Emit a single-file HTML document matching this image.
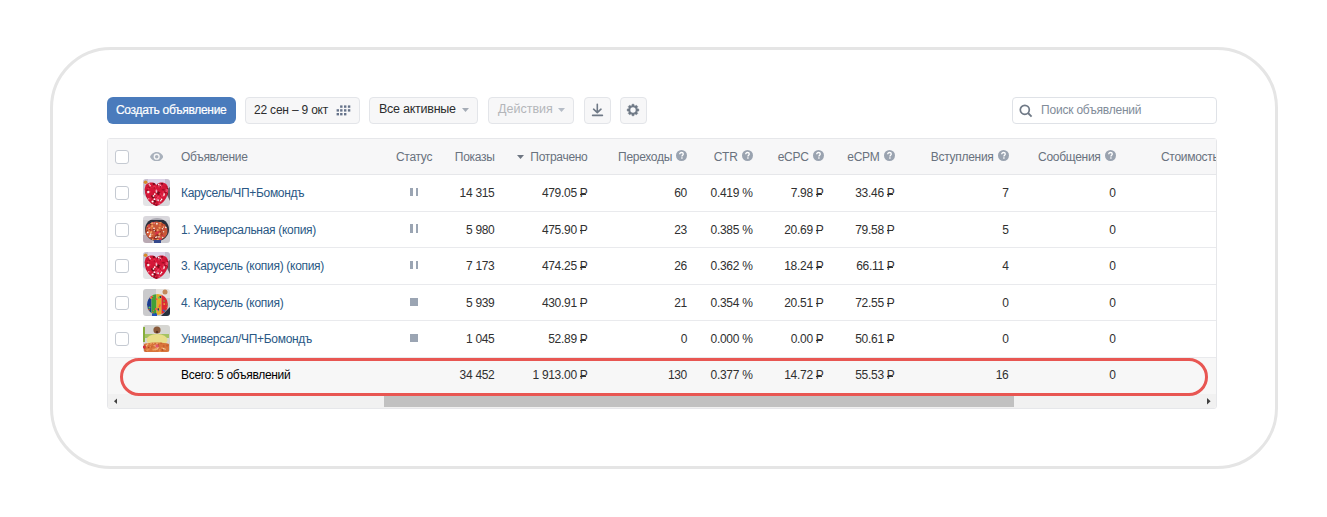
<!DOCTYPE html><html><head><meta charset="utf-8"><style>
*{box-sizing:border-box;margin:0;padding:0}
html,body{width:1327px;height:517px;overflow:hidden;background:#fff;font-family:"Liberation Sans",sans-serif;font-size:12px;color:#000}
div,span,svg{position:absolute}
.t{white-space:nowrap;line-height:14px;letter-spacing:-0.3px}
.frame{left:50px;top:47px;width:1228px;height:422px;border:3px solid #e5e5e5;border-radius:61px}
.btn{top:97px;height:27px;border:1px solid #e3e5e9;border-radius:4px;background:#f7f7f8}
.blue{background:#4a7bbc;border:none;border-radius:6px}
.h{color:#69727e}
.lnk{color:#2a5885}
.cb{left:115px;width:14px;height:14px;border:1px solid #c5cad2;border-radius:3px;background:#fff}
.q{width:11px;height:11px;border-radius:50%;background:#9aa3b0}
.th{left:143px;width:27px;height:27px;border-radius:3px;overflow:hidden}
.rub{position:relative;display:inline-block;margin-left:3px}
.rub:after{content:"";position:absolute;left:0.5px;top:7.6px;width:5.5px;height:1px;background:currentColor}
.d{color:#303030}
</style></head><body>
<div class="frame"></div>
<div class="btn blue" style="left:107px;width:129px"></div>
<span class="t" style="left:116px;top:102.5px;color:#fff;letter-spacing:-0.3px;-webkit-text-stroke:0.2px #fff">Создать объявление</span>
<div class="btn" style="left:245px;width:115px"></div>
<span class="t" style="left:254px;top:103px;letter-spacing:-0.2px;color:#2c2d2e">22 сен – 9 окт</span>
<svg style="left:336px;top:105px" width="15" height="11" viewBox="0 0 15 11"><g fill="#66738a"><rect x="4.1" y="0.4" width="2.4" height="2.4"/><rect x="8" y="0.4" width="2.4" height="2.4"/><rect x="11.9" y="0.4" width="2.4" height="2.4"/><rect x="0.6" y="4.2" width="2.4" height="2.4"/><rect x="4.1" y="4.2" width="2.4" height="2.4"/><rect x="8" y="4.2" width="2.4" height="2.4"/><rect x="11.9" y="4.2" width="2.4" height="2.4"/><rect x="0.6" y="8" width="2.4" height="2.4"/><rect x="4.1" y="8" width="2.4" height="2.4"/><rect x="8" y="8" width="2.4" height="2.4"/></g></svg>
<div class="btn" style="left:369px;width:109px"></div>
<span class="t" style="left:379px;top:102px;font-size:12.5px;letter-spacing:-0.25px;color:#2c2d2e">Все активные</span>
<svg style="left:462px;top:108px" width="7" height="4" viewBox="0 0 7 4"><path d="M0 0H7L3.5 4Z" fill="#a5acb6"/></svg>
<div class="btn" style="left:488px;width:86px"></div>
<span class="t" style="left:498px;top:102px;font-size:12.5px;letter-spacing:0;color:#b4b6ba">Действия</span>
<svg style="left:558px;top:108px" width="7" height="4" viewBox="0 0 7 4"><path d="M0 0H7L3.5 4Z" fill="#b5bcc6"/></svg>
<div class="btn" style="left:584px;width:26.5px"></div>
<svg style="left:591px;top:102px" width="13" height="15" viewBox="0 0 13 15"><path d="M6.3 2.2V10.3M2.6 7.2L6.3 10.6L10 7.2" stroke="#6f7986" stroke-width="1.6" fill="none" stroke-linecap="round" stroke-linejoin="round"/><path d="M1.6 13.4H11.4" stroke="#6f7986" stroke-width="1.6" stroke-linecap="round"/></svg>
<div class="btn" style="left:620px;width:27px"></div>
<svg style="left:626px;top:103px" width="14" height="14" viewBox="-7.5 -7.5 15 15"><path d="M-0.99 -6.22L0.99 -6.22L1.65 -3.97L3.70 -5.10L5.10 -3.70L3.97 -1.65L6.22 -0.99L6.22 0.99L3.97 1.65L5.10 3.70L3.70 5.10L1.65 3.97L0.99 6.22L-0.99 6.22L-1.65 3.97L-3.70 5.10L-5.10 3.70L-3.97 1.65L-6.22 0.99L-6.22 -0.99L-3.97 -1.65L-5.10 -3.70L-3.70 -5.10L-1.65 -3.97Z" fill="#6f7986" stroke="#6f7986" stroke-width="0.5" stroke-linejoin="round"/><circle r="2.9" fill="#f7f8fa"/></svg>
<div class="btn" style="left:1012px;width:205px;background:#fff;border-color:#dfe2e7"></div>
<span class="t" style="left:1041px;top:103px;color:#818c99;letter-spacing:-0.2px">Поиск объявлений</span>
<svg style="left:1019px;top:104px" width="14" height="14" viewBox="0 0 14 14"><circle cx="5.8" cy="5.8" r="4.5" stroke="#6f7986" stroke-width="1.7" fill="none"/><path d="M9 9L12.6 12.6" stroke="#6f7986" stroke-width="1.8"/></svg>
<div style="left:107px;top:138px;width:1110px;height:271px;border:1px solid #e6e7ea;border-radius:3px;background:#fff"></div>
<div style="left:108px;top:139px;width:1108px;height:35.5px;background:#f7f7f8;border-bottom:1px solid #e6e7ea"></div>
<div class="cb" style="top:150px"></div>
<svg style="left:149.8px;top:152px" width="13.4" height="9.4" viewBox="0 0 13.4 9.4"><path d="M6.7 0C3.4 0 0.9 2.6 0 4.7C0.9 6.8 3.4 9.4 6.7 9.4C10 9.4 12.5 6.8 13.4 4.7C12.5 2.6 10 0 6.7 0Z" fill="#a9b1bc"/><circle cx="6.7" cy="4.7" r="3.1" fill="#f7f7f8"/><circle cx="6.7" cy="4.7" r="1.75" fill="#a9b1bc"/></svg>
<span class="t h" style="left:181px;top:150px">Объявление</span>
<span class="t h" style="left:396px;top:150px">Статус</span>
<span class="t h" style="right:832.5px;top:150px;">Показы</span>
<svg style="left:517px;top:155px" width="7" height="4" viewBox="0 0 7 4"><path d="M0 0H7L3.5 4Z" fill="#6e7682"/></svg>
<span class="t h" style="right:739.5px;top:150px;">Потрачено</span>
<span class="t h" style="right:655px;top:150px;">Переходы</span>
<svg style="left:676px;top:149.5px" width="11" height="11" viewBox="0 0 11 11"><circle cx="5.5" cy="5.5" r="5.5" fill="#9aa3b0"/><path d="M3.7 4.2C3.7 3.1 4.5 2.5 5.5 2.5C6.5 2.5 7.3 3.1 7.3 4C7.3 5.1 5.9 5.2 5.9 6.4" stroke="#fff" stroke-width="1.3" fill="none"/><rect x="5.2" y="7.3" width="1.4" height="1.4" fill="#fff"/></svg>
<span class="t h" style="right:589.5px;top:150px;">CTR</span>
<svg style="left:741.5px;top:149.5px" width="11" height="11" viewBox="0 0 11 11"><circle cx="5.5" cy="5.5" r="5.5" fill="#9aa3b0"/><path d="M3.7 4.2C3.7 3.1 4.5 2.5 5.5 2.5C6.5 2.5 7.3 3.1 7.3 4C7.3 5.1 5.9 5.2 5.9 6.4" stroke="#fff" stroke-width="1.3" fill="none"/><rect x="5.2" y="7.3" width="1.4" height="1.4" fill="#fff"/></svg>
<span class="t h" style="right:518.5px;top:150px;">eCPC</span>
<svg style="left:812.5px;top:149.5px" width="11" height="11" viewBox="0 0 11 11"><circle cx="5.5" cy="5.5" r="5.5" fill="#9aa3b0"/><path d="M3.7 4.2C3.7 3.1 4.5 2.5 5.5 2.5C6.5 2.5 7.3 3.1 7.3 4C7.3 5.1 5.9 5.2 5.9 6.4" stroke="#fff" stroke-width="1.3" fill="none"/><rect x="5.2" y="7.3" width="1.4" height="1.4" fill="#fff"/></svg>
<span class="t h" style="right:447.5px;top:150px;">eCPM</span>
<svg style="left:883.5px;top:149.5px" width="11" height="11" viewBox="0 0 11 11"><circle cx="5.5" cy="5.5" r="5.5" fill="#9aa3b0"/><path d="M3.7 4.2C3.7 3.1 4.5 2.5 5.5 2.5C6.5 2.5 7.3 3.1 7.3 4C7.3 5.1 5.9 5.2 5.9 6.4" stroke="#fff" stroke-width="1.3" fill="none"/><rect x="5.2" y="7.3" width="1.4" height="1.4" fill="#fff"/></svg>
<span class="t h" style="right:333.5px;top:150px;">Вступления</span>
<svg style="left:997.5px;top:149.5px" width="11" height="11" viewBox="0 0 11 11"><circle cx="5.5" cy="5.5" r="5.5" fill="#9aa3b0"/><path d="M3.7 4.2C3.7 3.1 4.5 2.5 5.5 2.5C6.5 2.5 7.3 3.1 7.3 4C7.3 5.1 5.9 5.2 5.9 6.4" stroke="#fff" stroke-width="1.3" fill="none"/><rect x="5.2" y="7.3" width="1.4" height="1.4" fill="#fff"/></svg>
<span class="t h" style="right:226.5px;top:150px;">Сообщения</span>
<svg style="left:1104.5px;top:149.5px" width="11" height="11" viewBox="0 0 11 11"><circle cx="5.5" cy="5.5" r="5.5" fill="#9aa3b0"/><path d="M3.7 4.2C3.7 3.1 4.5 2.5 5.5 2.5C6.5 2.5 7.3 3.1 7.3 4C7.3 5.1 5.9 5.2 5.9 6.4" stroke="#fff" stroke-width="1.3" fill="none"/><rect x="5.2" y="7.3" width="1.4" height="1.4" fill="#fff"/></svg>
<span class="t h" style="left:1161px;top:150px;width:55px;overflow:hidden">Стоимость</span>
<div class="cb" style="top:186.0px"></div>
<svg class="th" style="top:179.0px" width="27" height="27" viewBox="0 0 27 27"><defs><filter id="bl0" x="0" y="0" width="1" height="1"><feGaussianBlur stdDeviation="0.45"/></filter></defs><g filter="url(#bl0)"><rect width="27" height="27" fill="#c6c0d0"/><rect x="5" y="0" width="17" height="7" fill="#dcd4e8"/><path d="M0 15L12 27H0Z" fill="#e4e4e6"/><path d="M27 15L15 27H27Z" fill="#d8d8dc"/><path d="M22 12L27 8V22Z" fill="#6e5e66"/><circle cx="2.6" cy="3.2" r="1.8" fill="#d88a2a"/><clipPath id="hc0"><path d="M13.5 27C7 25 2 19 1.8 11C1.6 5 6 2.8 10.5 3.8C12 4.3 13 5.3 13.5 6.3C14 5.3 15 4.3 16.5 3.8C21 2.8 25.4 5 25.2 11C25 19 20 25 13.5 27Z"/></clipPath><path d="M13.5 27C7 25 2 19 1.8 11C1.6 5 6 2.8 10.5 3.8C12 4.3 13 5.3 13.5 6.3C14 5.3 15 4.3 16.5 3.8C21 2.8 25.4 5 25.2 11C25 19 20 25 13.5 27Z" fill="#d41838"/><g clip-path="url(#hc0)"><circle cx="12.3" cy="16.4" r="1.0" fill="#f0466a"/><circle cx="22.4" cy="7.6" r="1.0" fill="#c81430"/><circle cx="16.3" cy="7.5" r="0.9" fill="#f0466a"/><circle cx="3.3" cy="22.4" r="1.1" fill="#a00c26"/><circle cx="10.9" cy="13.9" r="1.2" fill="#c81430"/><circle cx="16.6" cy="23.0" r="0.7" fill="#a00c26"/><circle cx="5.8" cy="8.8" r="1.3" fill="#a00c26"/><circle cx="9.2" cy="17.2" r="1.1" fill="#7a0a1c"/><circle cx="17.0" cy="15.0" r="1.0" fill="#a00c26"/><circle cx="8.0" cy="26.9" r="1.2" fill="#a00c26"/><circle cx="8.9" cy="8.5" r="0.6" fill="#e82a48"/><circle cx="15.1" cy="5.6" r="1.4" fill="#a00c26"/><circle cx="10.7" cy="26.0" r="0.8" fill="#a00c26"/><circle cx="24.2" cy="4.3" r="1.5" fill="#f0466a"/><circle cx="10.9" cy="4.8" r="1.3" fill="#7a0a1c"/><circle cx="7.7" cy="5.1" r="0.6" fill="#e82a48"/><circle cx="11.3" cy="25.1" r="0.8" fill="#7a0a1c"/><circle cx="3.5" cy="4.4" r="0.8" fill="#f0466a"/><circle cx="15.0" cy="13.7" r="1.5" fill="#7a0a1c"/><circle cx="20.2" cy="13.1" r="0.7" fill="#f0466a"/><circle cx="11.5" cy="8.1" r="1.4" fill="#e82a48"/><circle cx="25.4" cy="17.2" r="0.8" fill="#a00c26"/><circle cx="10.9" cy="23.5" r="0.7" fill="#c81430"/><circle cx="25.7" cy="8.1" r="0.6" fill="#e82a48"/><circle cx="16.3" cy="22.9" r="0.7" fill="#f0466a"/><circle cx="3.3" cy="17.0" r="0.6" fill="#7a0a1c"/><circle cx="10.2" cy="17.9" r="1.5" fill="#7a0a1c"/><circle cx="13.1" cy="16.8" r="0.8" fill="#f0466a"/><circle cx="4.9" cy="24.8" r="0.8" fill="#c81430"/><circle cx="5.7" cy="20.7" r="0.8" fill="#c81430"/><circle cx="24.8" cy="24.2" r="0.7" fill="#c81430"/><circle cx="2.2" cy="5.6" r="1.5" fill="#c81430"/><circle cx="7.0" cy="19.9" r="1.0" fill="#e82a48"/><circle cx="23.6" cy="14.8" r="0.8" fill="#c81430"/><circle cx="19.0" cy="4.7" r="1.0" fill="#7a0a1c"/><circle cx="17.3" cy="17.8" r="0.9" fill="#a00c26"/><circle cx="23.9" cy="7.9" r="0.7" fill="#a00c26"/><circle cx="11.3" cy="9.0" r="0.8" fill="#a00c26"/><circle cx="10.2" cy="16.7" r="0.7" fill="#7a0a1c"/><circle cx="4.5" cy="13.8" r="1.2" fill="#e82a48"/><circle cx="18.3" cy="17.0" r="1.1" fill="#7a0a1c"/><circle cx="24.1" cy="14.4" r="1.2" fill="#e82a48"/><circle cx="25.1" cy="3.5" r="1.0" fill="#a00c26"/><circle cx="19.3" cy="10.7" r="0.7" fill="#a00c26"/><circle cx="14.7" cy="20.7" r="1.3" fill="#7a0a1c"/><circle cx="23.9" cy="11.4" r="1.4" fill="#f0466a"/><circle cx="22.8" cy="13.0" r="1.4" fill="#a00c26"/><circle cx="15.3" cy="18.0" r="0.9" fill="#f0466a"/><circle cx="1.3" cy="4.7" r="1.2" fill="#a00c26"/><circle cx="25.8" cy="24.1" r="0.9" fill="#e82a48"/><circle cx="19.4" cy="16.9" r="1.0" fill="#f0466a"/><circle cx="14.5" cy="15.4" r="0.6" fill="#c81430"/><circle cx="16.0" cy="14.5" r="1.5" fill="#7a0a1c"/><circle cx="3.8" cy="21.7" r="0.8" fill="#f0466a"/><circle cx="1.3" cy="10.2" r="0.8" fill="#c81430"/><circle cx="5.2" cy="24.7" r="1.0" fill="#f0466a"/><circle cx="7.0" cy="12.7" r="0.8" fill="#e82a48"/><circle cx="11.8" cy="22.3" r="1.4" fill="#7a0a1c"/><circle cx="10.6" cy="17.0" r="0.8" fill="#e82a48"/><circle cx="4.4" cy="11.4" r="1.2" fill="#a00c26"/><circle cx="24.8" cy="9.6" r="0.7" fill="#7a0a1c"/><circle cx="12.8" cy="25.2" r="0.9" fill="#f0466a"/><circle cx="14.0" cy="19.1" r="1.0" fill="#c81430"/><circle cx="2.9" cy="3.8" r="0.6" fill="#c81430"/><circle cx="18.7" cy="16.7" r="1.2" fill="#e82a48"/><circle cx="15.1" cy="18.4" r="1.0" fill="#f0466a"/><circle cx="1.6" cy="22.9" r="1.3" fill="#7a0a1c"/><circle cx="20.9" cy="26.6" r="1.0" fill="#a00c26"/><circle cx="16.7" cy="18.7" r="1.5" fill="#e82a48"/><circle cx="18.1" cy="7.8" r="0.8" fill="#f0466a"/><circle cx="18.9" cy="21.1" r="1.2" fill="#c81430"/><circle cx="5.5" cy="9.5" r="1.1" fill="#e82a48"/><circle cx="24.7" cy="15.0" r="1.0" fill="#7a0a1c"/><circle cx="20.8" cy="24.7" r="1.0" fill="#a00c26"/><circle cx="23.3" cy="12.3" r="1.0" fill="#f0466a"/><circle cx="16.6" cy="24.8" r="1.1" fill="#f0466a"/><circle cx="17.3" cy="15.1" r="1.0" fill="#e82a48"/><circle cx="17.3" cy="7.9" r="0.8" fill="#a00c26"/><circle cx="23.5" cy="26.5" r="1.1" fill="#e82a48"/><circle cx="20.8" cy="10.7" r="0.9" fill="#a00c26"/><circle cx="3.1" cy="13.6" r="1.0" fill="#c81430"/><circle cx="7.9" cy="25.1" r="1.3" fill="#7a0a1c"/><circle cx="2.6" cy="22.2" r="1.1" fill="#7a0a1c"/><circle cx="18.2" cy="25.0" r="0.7" fill="#f0466a"/><circle cx="13.9" cy="20.4" r="1.5" fill="#f0466a"/><circle cx="13.3" cy="25.8" r="1.3" fill="#a00c26"/><circle cx="12.0" cy="16.4" r="1.2" fill="#c81430"/><circle cx="14.1" cy="23.2" r="0.8" fill="#c81430"/><circle cx="17.8" cy="25.9" r="0.8" fill="#c81430"/><circle cx="22.3" cy="26.2" r="0.8" fill="#c81430"/><circle cx="13.5" cy="12.8" r="0.9" fill="#f6eef0"/><circle cx="15.7" cy="5.5" r="0.9" fill="#f6eef0"/><circle cx="11.4" cy="20.2" r="0.9" fill="#f6eef0"/><circle cx="17.5" cy="6.3" r="0.8" fill="#f8a0b8"/><circle cx="23.1" cy="22.5" r="0.7" fill="#e8c8d4"/><circle cx="13.4" cy="11.5" r="0.9" fill="#f8a0b8"/><circle cx="5.3" cy="13.0" r="1.2" fill="#f6eef0"/><circle cx="5.7" cy="19.8" r="0.6" fill="#f6eef0"/><circle cx="6.3" cy="5.2" r="0.8" fill="#e8c8d4"/><circle cx="10.5" cy="16.8" r="0.9" fill="#f6eef0"/><circle cx="15.2" cy="21.2" r="1.0" fill="#e8c8d4"/><circle cx="17.7" cy="21.7" r="0.8" fill="#f6eef0"/><circle cx="11.7" cy="15.1" r="0.9" fill="#ffffff"/><circle cx="21.1" cy="15.1" r="0.9" fill="#ffffff"/><circle cx="20.9" cy="16.6" r="0.7" fill="#ffffff"/><circle cx="18.6" cy="20.4" r="0.8" fill="#ffffff"/><circle cx="9.6" cy="22.5" r="1.1" fill="#ffffff"/><circle cx="7.1" cy="6.8" r="0.7" fill="#ffffff"/></g></g></svg>
<span class="t lnk" style="left:181px;top:186.0px">Карусель/ЧП+Бомондъ</span>
<div style="left:410px;top:187.8px;width:2.8px;height:8.5px;background:#9ba5b3"></div><div style="left:415.5px;top:187.8px;width:2.7px;height:8.5px;background:#9ba5b3"></div>
<span class="t d" style="right:832.5px;top:186.0px;">14 315</span>
<span class="t d" style="right:739.5px;top:186.0px;">479.05<span class="rub">Р</span></span>
<span class="t d" style="right:640px;top:186.0px;">60</span>
<span class="t d" style="right:574.5px;top:186.0px;">0.419 %</span>
<span class="t d" style="right:503.5px;top:186.0px;">7.98<span class="rub">Р</span></span>
<span class="t d" style="right:432.5px;top:186.0px;">33.46<span class="rub">Р</span></span>
<span class="t d" style="right:318.5px;top:186.0px;">7</span>
<span class="t d" style="right:211.5px;top:186.0px;">0</span>
<div style="left:108px;top:210.5px;width:1108px;height:1px;background:#e9eaed"></div>
<div class="cb" style="top:222.5px"></div>
<svg class="th" style="top:215.5px" width="27" height="27" viewBox="0 0 27 27"><defs><filter id="bl1" x="0" y="0" width="1" height="1"><feGaussianBlur stdDeviation="0.45"/></filter></defs><g filter="url(#bl1)"><rect width="27" height="27" fill="#cdcbd0"/><rect x="0" y="19" width="9" height="8" fill="#b9a9b3"/><ellipse cx="14" cy="13.5" rx="12" ry="11.5" fill="#2c2e3c"/><rect x="0" y="0" width="27" height="4" fill="#e0dde2" opacity="0.7"/><clipPath id="pc1"><ellipse cx="13.5" cy="15" rx="11" ry="9.5"/></clipPath><ellipse cx="13.5" cy="15" rx="11" ry="9.5" fill="#c85838"/><g clip-path="url(#pc1)"><circle cx="5.8" cy="12.4" r="1.3" fill="#d8344a"/><circle cx="12.4" cy="20.0" r="0.8" fill="#b03a28"/><circle cx="16.6" cy="20.2" r="0.8" fill="#e07040"/><circle cx="17.6" cy="22.3" r="0.7" fill="#f0a060"/><circle cx="14.1" cy="19.4" r="1.5" fill="#8a2a20"/><circle cx="20.7" cy="20.3" r="0.7" fill="#d8344a"/><circle cx="4.7" cy="15.5" r="1.4" fill="#8a2a20"/><circle cx="13.6" cy="8.6" r="0.8" fill="#e07040"/><circle cx="20.8" cy="23.8" r="1.1" fill="#e07040"/><circle cx="6.7" cy="17.9" r="1.3" fill="#e07040"/><circle cx="10.5" cy="13.9" r="0.9" fill="#8a2a20"/><circle cx="8.2" cy="12.1" r="1.4" fill="#e07040"/><circle cx="7.6" cy="13.6" r="1.0" fill="#f0a060"/><circle cx="7.9" cy="8.1" r="1.3" fill="#8a2a20"/><circle cx="10.5" cy="6.6" r="1.1" fill="#d8344a"/><circle cx="7.8" cy="16.1" r="1.3" fill="#f0a060"/><circle cx="9.2" cy="22.3" r="1.3" fill="#b03a28"/><circle cx="12.1" cy="22.0" r="1.2" fill="#8a2a20"/><circle cx="19.3" cy="19.5" r="0.8" fill="#d8344a"/><circle cx="7.7" cy="20.1" r="1.0" fill="#f0a060"/><circle cx="4.2" cy="11.8" r="0.6" fill="#8a2a20"/><circle cx="9.5" cy="23.3" r="0.9" fill="#f0a060"/><circle cx="17.2" cy="15.8" r="0.7" fill="#8a2a20"/><circle cx="14.3" cy="14.5" r="1.2" fill="#b03a28"/><circle cx="19.2" cy="23.6" r="0.7" fill="#e07040"/><circle cx="6.2" cy="9.5" r="1.0" fill="#d8344a"/><circle cx="5.0" cy="8.7" r="0.6" fill="#d8344a"/><circle cx="9.2" cy="10.2" r="1.1" fill="#f0a060"/><circle cx="14.2" cy="23.4" r="1.4" fill="#8a2a20"/><circle cx="6.0" cy="13.4" r="1.1" fill="#e07040"/><circle cx="17.4" cy="23.2" r="1.4" fill="#d8344a"/><circle cx="7.2" cy="14.0" r="1.4" fill="#b03a28"/><circle cx="14.8" cy="16.3" r="1.5" fill="#d8344a"/><circle cx="12.4" cy="15.0" r="0.9" fill="#8a2a20"/><circle cx="14.6" cy="14.2" r="1.1" fill="#f0a060"/><circle cx="9.7" cy="18.6" r="0.6" fill="#f0a060"/><circle cx="19.4" cy="16.1" r="1.0" fill="#b03a28"/><circle cx="17.7" cy="6.0" r="1.3" fill="#f0a060"/><circle cx="5.0" cy="23.8" r="0.7" fill="#f0a060"/><circle cx="22.1" cy="13.2" r="0.8" fill="#d8344a"/><circle cx="19.1" cy="5.9" r="1.4" fill="#e07040"/><circle cx="18.5" cy="13.9" r="1.1" fill="#b03a28"/><circle cx="6.3" cy="16.9" r="0.7" fill="#d8344a"/><circle cx="21.2" cy="11.8" r="0.7" fill="#b03a28"/><circle cx="12.9" cy="17.7" r="1.1" fill="#d8344a"/><circle cx="16.8" cy="18.0" r="1.3" fill="#f0a060"/><circle cx="14.6" cy="24.0" r="1.3" fill="#f0a060"/><circle cx="8.8" cy="7.2" r="1.3" fill="#f0a060"/><circle cx="16.5" cy="11.8" r="1.1" fill="#f0a060"/><circle cx="18.5" cy="18.3" r="1.2" fill="#b03a28"/><circle cx="19.1" cy="8.6" r="1.1" fill="#b03a28"/><circle cx="17.1" cy="8.7" r="1.2" fill="#e07040"/><circle cx="4.2" cy="9.9" r="1.2" fill="#e07040"/><circle cx="6.0" cy="15.3" r="1.3" fill="#e07040"/><circle cx="22.3" cy="8.1" r="1.2" fill="#b03a28"/><circle cx="11.2" cy="14.6" r="0.7" fill="#f2ece6"/><circle cx="13.9" cy="7.7" r="0.9" fill="#f2ece6"/><circle cx="12.8" cy="21.4" r="0.7" fill="#f2ece6"/><circle cx="19.4" cy="12.8" r="0.7" fill="#f2ece6"/><circle cx="17.4" cy="24.8" r="0.6" fill="#ffffff"/><circle cx="19.7" cy="21.5" r="0.7" fill="#f2ece6"/><circle cx="11.1" cy="6.9" r="0.5" fill="#ffffff"/><circle cx="4.8" cy="16.3" r="0.9" fill="#ffffff"/><circle cx="13.2" cy="21.5" r="0.5" fill="#f2ece6"/><circle cx="7.7" cy="18.2" r="0.8" fill="#f2ece6"/><circle cx="13.9" cy="20.3" r="0.6" fill="#ffffff"/><circle cx="6.1" cy="12.2" r="0.7" fill="#e8d8c8"/><circle cx="22.9" cy="11.4" r="0.8" fill="#ffffff"/><circle cx="23.2" cy="23.8" r="0.7" fill="#ffffff"/><circle cx="20.7" cy="11.1" r="0.6" fill="#ffffff"/><circle cx="24.3" cy="19.6" r="0.6" fill="#e8d8c8"/><circle cx="11.0" cy="12.3" r="0.8" fill="#ffffff"/><circle cx="15.9" cy="20.9" r="0.8" fill="#e8d8c8"/><circle cx="20.5" cy="15.8" r="0.8" fill="#e8d8c8"/><circle cx="6.9" cy="20.2" r="0.9" fill="#ffffff"/><circle cx="7.9" cy="6.2" r="0.8" fill="#f2ece6"/><circle cx="24.3" cy="18.0" r="0.5" fill="#ffffff"/></g><rect x="11" y="24" width="7" height="3" fill="#34488c"/></g></svg>
<span class="t lnk" style="left:181px;top:222.5px">1. Универсальная (копия)</span>
<div style="left:410px;top:224.3px;width:2.8px;height:8.5px;background:#9ba5b3"></div><div style="left:415.5px;top:224.3px;width:2.7px;height:8.5px;background:#9ba5b3"></div>
<span class="t d" style="right:832.5px;top:222.5px;">5 980</span>
<span class="t d" style="right:739.5px;top:222.5px;">475.90<span class="rub">Р</span></span>
<span class="t d" style="right:640px;top:222.5px;">23</span>
<span class="t d" style="right:574.5px;top:222.5px;">0.385 %</span>
<span class="t d" style="right:503.5px;top:222.5px;">20.69<span class="rub">Р</span></span>
<span class="t d" style="right:432.5px;top:222.5px;">79.58<span class="rub">Р</span></span>
<span class="t d" style="right:318.5px;top:222.5px;">5</span>
<span class="t d" style="right:211.5px;top:222.5px;">0</span>
<div style="left:108px;top:247.0px;width:1108px;height:1px;background:#e9eaed"></div>
<div class="cb" style="top:259.0px"></div>
<svg class="th" style="top:252.0px" width="27" height="27" viewBox="0 0 27 27"><defs><filter id="bl2" x="0" y="0" width="1" height="1"><feGaussianBlur stdDeviation="0.45"/></filter></defs><g filter="url(#bl2)"><rect width="27" height="27" fill="#c6c0d0"/><rect x="5" y="0" width="17" height="7" fill="#dcd4e8"/><path d="M0 15L12 27H0Z" fill="#e4e4e6"/><path d="M27 15L15 27H27Z" fill="#d8d8dc"/><path d="M22 12L27 8V22Z" fill="#6e5e66"/><circle cx="2.6" cy="3.2" r="1.8" fill="#d88a2a"/><clipPath id="hc2"><path d="M13.5 27C7 25 2 19 1.8 11C1.6 5 6 2.8 10.5 3.8C12 4.3 13 5.3 13.5 6.3C14 5.3 15 4.3 16.5 3.8C21 2.8 25.4 5 25.2 11C25 19 20 25 13.5 27Z"/></clipPath><path d="M13.5 27C7 25 2 19 1.8 11C1.6 5 6 2.8 10.5 3.8C12 4.3 13 5.3 13.5 6.3C14 5.3 15 4.3 16.5 3.8C21 2.8 25.4 5 25.2 11C25 19 20 25 13.5 27Z" fill="#d41838"/><g clip-path="url(#hc2)"><circle cx="12.3" cy="16.4" r="1.0" fill="#f0466a"/><circle cx="22.4" cy="7.6" r="1.0" fill="#c81430"/><circle cx="16.3" cy="7.5" r="0.9" fill="#f0466a"/><circle cx="3.3" cy="22.4" r="1.1" fill="#a00c26"/><circle cx="10.9" cy="13.9" r="1.2" fill="#c81430"/><circle cx="16.6" cy="23.0" r="0.7" fill="#a00c26"/><circle cx="5.8" cy="8.8" r="1.3" fill="#a00c26"/><circle cx="9.2" cy="17.2" r="1.1" fill="#7a0a1c"/><circle cx="17.0" cy="15.0" r="1.0" fill="#a00c26"/><circle cx="8.0" cy="26.9" r="1.2" fill="#a00c26"/><circle cx="8.9" cy="8.5" r="0.6" fill="#e82a48"/><circle cx="15.1" cy="5.6" r="1.4" fill="#a00c26"/><circle cx="10.7" cy="26.0" r="0.8" fill="#a00c26"/><circle cx="24.2" cy="4.3" r="1.5" fill="#f0466a"/><circle cx="10.9" cy="4.8" r="1.3" fill="#7a0a1c"/><circle cx="7.7" cy="5.1" r="0.6" fill="#e82a48"/><circle cx="11.3" cy="25.1" r="0.8" fill="#7a0a1c"/><circle cx="3.5" cy="4.4" r="0.8" fill="#f0466a"/><circle cx="15.0" cy="13.7" r="1.5" fill="#7a0a1c"/><circle cx="20.2" cy="13.1" r="0.7" fill="#f0466a"/><circle cx="11.5" cy="8.1" r="1.4" fill="#e82a48"/><circle cx="25.4" cy="17.2" r="0.8" fill="#a00c26"/><circle cx="10.9" cy="23.5" r="0.7" fill="#c81430"/><circle cx="25.7" cy="8.1" r="0.6" fill="#e82a48"/><circle cx="16.3" cy="22.9" r="0.7" fill="#f0466a"/><circle cx="3.3" cy="17.0" r="0.6" fill="#7a0a1c"/><circle cx="10.2" cy="17.9" r="1.5" fill="#7a0a1c"/><circle cx="13.1" cy="16.8" r="0.8" fill="#f0466a"/><circle cx="4.9" cy="24.8" r="0.8" fill="#c81430"/><circle cx="5.7" cy="20.7" r="0.8" fill="#c81430"/><circle cx="24.8" cy="24.2" r="0.7" fill="#c81430"/><circle cx="2.2" cy="5.6" r="1.5" fill="#c81430"/><circle cx="7.0" cy="19.9" r="1.0" fill="#e82a48"/><circle cx="23.6" cy="14.8" r="0.8" fill="#c81430"/><circle cx="19.0" cy="4.7" r="1.0" fill="#7a0a1c"/><circle cx="17.3" cy="17.8" r="0.9" fill="#a00c26"/><circle cx="23.9" cy="7.9" r="0.7" fill="#a00c26"/><circle cx="11.3" cy="9.0" r="0.8" fill="#a00c26"/><circle cx="10.2" cy="16.7" r="0.7" fill="#7a0a1c"/><circle cx="4.5" cy="13.8" r="1.2" fill="#e82a48"/><circle cx="18.3" cy="17.0" r="1.1" fill="#7a0a1c"/><circle cx="24.1" cy="14.4" r="1.2" fill="#e82a48"/><circle cx="25.1" cy="3.5" r="1.0" fill="#a00c26"/><circle cx="19.3" cy="10.7" r="0.7" fill="#a00c26"/><circle cx="14.7" cy="20.7" r="1.3" fill="#7a0a1c"/><circle cx="23.9" cy="11.4" r="1.4" fill="#f0466a"/><circle cx="22.8" cy="13.0" r="1.4" fill="#a00c26"/><circle cx="15.3" cy="18.0" r="0.9" fill="#f0466a"/><circle cx="1.3" cy="4.7" r="1.2" fill="#a00c26"/><circle cx="25.8" cy="24.1" r="0.9" fill="#e82a48"/><circle cx="19.4" cy="16.9" r="1.0" fill="#f0466a"/><circle cx="14.5" cy="15.4" r="0.6" fill="#c81430"/><circle cx="16.0" cy="14.5" r="1.5" fill="#7a0a1c"/><circle cx="3.8" cy="21.7" r="0.8" fill="#f0466a"/><circle cx="1.3" cy="10.2" r="0.8" fill="#c81430"/><circle cx="5.2" cy="24.7" r="1.0" fill="#f0466a"/><circle cx="7.0" cy="12.7" r="0.8" fill="#e82a48"/><circle cx="11.8" cy="22.3" r="1.4" fill="#7a0a1c"/><circle cx="10.6" cy="17.0" r="0.8" fill="#e82a48"/><circle cx="4.4" cy="11.4" r="1.2" fill="#a00c26"/><circle cx="24.8" cy="9.6" r="0.7" fill="#7a0a1c"/><circle cx="12.8" cy="25.2" r="0.9" fill="#f0466a"/><circle cx="14.0" cy="19.1" r="1.0" fill="#c81430"/><circle cx="2.9" cy="3.8" r="0.6" fill="#c81430"/><circle cx="18.7" cy="16.7" r="1.2" fill="#e82a48"/><circle cx="15.1" cy="18.4" r="1.0" fill="#f0466a"/><circle cx="1.6" cy="22.9" r="1.3" fill="#7a0a1c"/><circle cx="20.9" cy="26.6" r="1.0" fill="#a00c26"/><circle cx="16.7" cy="18.7" r="1.5" fill="#e82a48"/><circle cx="18.1" cy="7.8" r="0.8" fill="#f0466a"/><circle cx="18.9" cy="21.1" r="1.2" fill="#c81430"/><circle cx="5.5" cy="9.5" r="1.1" fill="#e82a48"/><circle cx="24.7" cy="15.0" r="1.0" fill="#7a0a1c"/><circle cx="20.8" cy="24.7" r="1.0" fill="#a00c26"/><circle cx="23.3" cy="12.3" r="1.0" fill="#f0466a"/><circle cx="16.6" cy="24.8" r="1.1" fill="#f0466a"/><circle cx="17.3" cy="15.1" r="1.0" fill="#e82a48"/><circle cx="17.3" cy="7.9" r="0.8" fill="#a00c26"/><circle cx="23.5" cy="26.5" r="1.1" fill="#e82a48"/><circle cx="20.8" cy="10.7" r="0.9" fill="#a00c26"/><circle cx="3.1" cy="13.6" r="1.0" fill="#c81430"/><circle cx="7.9" cy="25.1" r="1.3" fill="#7a0a1c"/><circle cx="2.6" cy="22.2" r="1.1" fill="#7a0a1c"/><circle cx="18.2" cy="25.0" r="0.7" fill="#f0466a"/><circle cx="13.9" cy="20.4" r="1.5" fill="#f0466a"/><circle cx="13.3" cy="25.8" r="1.3" fill="#a00c26"/><circle cx="12.0" cy="16.4" r="1.2" fill="#c81430"/><circle cx="14.1" cy="23.2" r="0.8" fill="#c81430"/><circle cx="17.8" cy="25.9" r="0.8" fill="#c81430"/><circle cx="22.3" cy="26.2" r="0.8" fill="#c81430"/><circle cx="13.5" cy="12.8" r="0.9" fill="#f6eef0"/><circle cx="15.7" cy="5.5" r="0.9" fill="#f6eef0"/><circle cx="11.4" cy="20.2" r="0.9" fill="#f6eef0"/><circle cx="17.5" cy="6.3" r="0.8" fill="#f8a0b8"/><circle cx="23.1" cy="22.5" r="0.7" fill="#e8c8d4"/><circle cx="13.4" cy="11.5" r="0.9" fill="#f8a0b8"/><circle cx="5.3" cy="13.0" r="1.2" fill="#f6eef0"/><circle cx="5.7" cy="19.8" r="0.6" fill="#f6eef0"/><circle cx="6.3" cy="5.2" r="0.8" fill="#e8c8d4"/><circle cx="10.5" cy="16.8" r="0.9" fill="#f6eef0"/><circle cx="15.2" cy="21.2" r="1.0" fill="#e8c8d4"/><circle cx="17.7" cy="21.7" r="0.8" fill="#f6eef0"/><circle cx="11.7" cy="15.1" r="0.9" fill="#ffffff"/><circle cx="21.1" cy="15.1" r="0.9" fill="#ffffff"/><circle cx="20.9" cy="16.6" r="0.7" fill="#ffffff"/><circle cx="18.6" cy="20.4" r="0.8" fill="#ffffff"/><circle cx="9.6" cy="22.5" r="1.1" fill="#ffffff"/><circle cx="7.1" cy="6.8" r="0.7" fill="#ffffff"/></g></g></svg>
<span class="t lnk" style="left:181px;top:259.0px">3. Карусель (копия) (копия)</span>
<div style="left:410px;top:260.8px;width:2.8px;height:8.5px;background:#9ba5b3"></div><div style="left:415.5px;top:260.8px;width:2.7px;height:8.5px;background:#9ba5b3"></div>
<span class="t d" style="right:832.5px;top:259.0px;">7 173</span>
<span class="t d" style="right:739.5px;top:259.0px;">474.25<span class="rub">Р</span></span>
<span class="t d" style="right:640px;top:259.0px;">26</span>
<span class="t d" style="right:574.5px;top:259.0px;">0.362 %</span>
<span class="t d" style="right:503.5px;top:259.0px;">18.24<span class="rub">Р</span></span>
<span class="t d" style="right:432.5px;top:259.0px;">66.11<span class="rub">Р</span></span>
<span class="t d" style="right:318.5px;top:259.0px;">4</span>
<span class="t d" style="right:211.5px;top:259.0px;">0</span>
<div style="left:108px;top:283.5px;width:1108px;height:1px;background:#e9eaed"></div>
<div class="cb" style="top:295.5px"></div>
<svg class="th" style="top:288.5px" width="27" height="27" viewBox="0 0 27 27"><defs><filter id="bl3" x="0" y="0" width="1" height="1"><feGaussianBlur stdDeviation="0.45"/></filter></defs><g filter="url(#bl3)"><rect width="27" height="27" fill="#cacacc"/><rect x="13" y="0" width="14" height="9" fill="#e6e2de"/><circle cx="22" cy="3" r="2.5" fill="#c48a5a"/><path d="M18 27L27 18V27Z" fill="#263040"/><clipPath id="rc3"><circle cx="14.5" cy="15.5" r="10.5"/></clipPath><g clip-path="url(#rc3)"><rect x="0" y="0" width="8.5" height="27" fill="#1c3c90"/><rect x="8.5" y="0" width="5" height="27" fill="#42a038"/><rect x="13.5" y="0" width="5" height="27" fill="#e4ac28"/><rect x="18.5" y="0" width="9" height="27" fill="#de2c30"/><circle cx="15.5" cy="21.5" r="0.7" fill="#2a66d0"/><circle cx="9.7" cy="7.2" r="0.6" fill="#f0d040"/><circle cx="17.3" cy="8.0" r="1.0" fill="#1a2a60"/><circle cx="12.9" cy="20.0" r="1.0" fill="#ff4a4a"/><circle cx="15.0" cy="21.1" r="0.7" fill="#ff4a4a"/><circle cx="21.0" cy="12.0" r="0.8" fill="#60c050"/><circle cx="15.3" cy="20.1" r="0.9" fill="#1a2a60"/><circle cx="5.0" cy="20.9" r="0.7" fill="#1a2a60"/><circle cx="4.1" cy="12.9" r="1.0" fill="#2a66d0"/><circle cx="24.1" cy="18.4" r="0.7" fill="#e07a20"/><circle cx="4.2" cy="7.3" r="1.0" fill="#ff4a4a"/><circle cx="9.2" cy="8.4" r="0.7" fill="#1a2a60"/><circle cx="7.5" cy="9.3" r="0.8" fill="#ff4a4a"/><circle cx="9.8" cy="23.6" r="0.7" fill="#ff4a4a"/><circle cx="6.4" cy="18.6" r="1.0" fill="#60c050"/><circle cx="19.8" cy="5.4" r="1.0" fill="#ff4a4a"/><circle cx="4.8" cy="7.3" r="0.7" fill="#60c050"/><circle cx="16.4" cy="17.6" r="0.9" fill="#ff4a4a"/><circle cx="8.7" cy="8.9" r="0.7" fill="#f0d040"/><circle cx="23.1" cy="24.7" r="0.8" fill="#1a2a60"/><circle cx="21.2" cy="15.1" r="0.8" fill="#f0d040"/><circle cx="12.5" cy="25.1" r="0.8" fill="#1a2a60"/><circle cx="24.1" cy="15.1" r="0.7" fill="#60c050"/><circle cx="8.6" cy="7.8" r="1.1" fill="#ff4a4a"/><circle cx="20.7" cy="21.3" r="0.9" fill="#2a66d0"/><circle cx="9.0" cy="5.2" r="1.0" fill="#ff4a4a"/><circle cx="13.5" cy="10.2" r="0.9" fill="#ff4a4a"/><circle cx="7.3" cy="8.3" r="0.6" fill="#f0d040"/><circle cx="23.1" cy="22.0" r="0.9" fill="#60c050"/><circle cx="24.9" cy="10.6" r="0.5" fill="#e07a20"/><circle cx="16.0" cy="8.7" r="1.0" fill="#60c050"/><circle cx="21.8" cy="22.3" r="0.7" fill="#2a66d0"/><circle cx="16.9" cy="16.1" r="0.9" fill="#ff4a4a"/><circle cx="5.7" cy="20.7" r="1.0" fill="#e07a20"/><circle cx="10.4" cy="21.6" r="0.6" fill="#ff4a4a"/></g><rect x="9" y="24.5" width="5" height="2.5" fill="#2050b8"/></g></svg>
<span class="t lnk" style="left:181px;top:295.5px">4. Карусель (копия)</span>
<div style="left:410px;top:297.7px;width:8px;height:8px;background:#9ba5b3"></div>
<span class="t d" style="right:832.5px;top:295.5px;">5 939</span>
<span class="t d" style="right:739.5px;top:295.5px;">430.91<span class="rub">Р</span></span>
<span class="t d" style="right:640px;top:295.5px;">21</span>
<span class="t d" style="right:574.5px;top:295.5px;">0.354 %</span>
<span class="t d" style="right:503.5px;top:295.5px;">20.51<span class="rub">Р</span></span>
<span class="t d" style="right:432.5px;top:295.5px;">72.55<span class="rub">Р</span></span>
<span class="t d" style="right:318.5px;top:295.5px;">0</span>
<span class="t d" style="right:211.5px;top:295.5px;">0</span>
<div style="left:108px;top:320.0px;width:1108px;height:1px;background:#e9eaed"></div>
<div class="cb" style="top:332.0px"></div>
<svg class="th" style="top:325.0px" width="27" height="27" viewBox="0 0 27 27"><defs><filter id="bl4" x="0" y="0" width="1" height="1"><feGaussianBlur stdDeviation="0.45"/></filter></defs><g filter="url(#bl4)"><rect width="27" height="27" fill="#d6d6d2"/><rect x="0" y="2" width="2" height="15" fill="#86ae3e"/><rect x="2" y="9" width="24" height="4" fill="#a4c264"/><circle cx="14" cy="5" r="3.6" fill="#8a5a3a"/><circle cx="14" cy="7" r="1.2" fill="#5a3020"/><ellipse cx="14" cy="15" rx="10.5" ry="6" fill="#e8de8a"/><clipPath id="fc4"><path d="M1 19C6 17 21 17 26 19V27H1Z"/></clipPath><path d="M1 19C6 17 21 17 26 19V27H1Z" fill="#d8743a"/><g clip-path="url(#fc4)"><circle cx="18.1" cy="24.8" r="0.6" fill="#c86030"/><circle cx="14.6" cy="22.3" r="1.2" fill="#f0b070"/><circle cx="25.1" cy="20.2" r="0.6" fill="#c86030"/><circle cx="8.6" cy="21.7" r="0.8" fill="#b04a20"/><circle cx="18.2" cy="18.1" r="1.0" fill="#c86030"/><circle cx="19.7" cy="24.8" r="1.0" fill="#b04a20"/><circle cx="1.3" cy="20.8" r="0.7" fill="#c86030"/><circle cx="15.1" cy="21.6" r="1.1" fill="#b04a20"/><circle cx="22.1" cy="24.2" r="0.6" fill="#f4d0a0"/><circle cx="16.7" cy="26.4" r="1.2" fill="#e89050"/><circle cx="19.9" cy="22.6" r="0.7" fill="#b04a20"/><circle cx="6.0" cy="24.3" r="0.7" fill="#e89050"/><circle cx="7.8" cy="21.7" r="0.8" fill="#e89050"/><circle cx="10.6" cy="18.0" r="0.6" fill="#f4d0a0"/><circle cx="17.9" cy="24.1" r="0.6" fill="#f0b070"/><circle cx="1.9" cy="21.6" r="0.6" fill="#b04a20"/><circle cx="1.8" cy="26.9" r="0.8" fill="#c86030"/><circle cx="2.8" cy="26.2" r="1.1" fill="#c86030"/><circle cx="4.5" cy="19.1" r="1.1" fill="#f0b070"/><circle cx="10.6" cy="20.3" r="0.9" fill="#c86030"/><circle cx="19.2" cy="23.1" r="1.2" fill="#e89050"/><circle cx="20.7" cy="23.6" r="0.9" fill="#f4d0a0"/><circle cx="7.5" cy="18.9" r="1.0" fill="#e89050"/><circle cx="3.7" cy="20.8" r="0.7" fill="#f4d0a0"/><circle cx="8.3" cy="18.0" r="0.7" fill="#f0b070"/><circle cx="14.5" cy="20.0" r="0.7" fill="#f0b070"/><circle cx="13.5" cy="18.4" r="1.2" fill="#f0b070"/><circle cx="13.9" cy="24.2" r="0.9" fill="#f0b070"/><circle cx="1.7" cy="23.6" r="0.6" fill="#b04a20"/><circle cx="12.9" cy="21.2" r="0.7" fill="#e89050"/><circle cx="24.2" cy="20.6" r="1.1" fill="#c86030"/><circle cx="12.3" cy="24.3" r="1.1" fill="#f0b070"/><circle cx="14.6" cy="22.6" r="1.1" fill="#f4d0a0"/><circle cx="5.2" cy="24.5" r="0.9" fill="#e89050"/><circle cx="4.1" cy="25.2" r="1.0" fill="#e89050"/><circle cx="10.1" cy="24.6" r="1.1" fill="#e89050"/><circle cx="5.6" cy="22.5" r="0.8" fill="#b04a20"/><circle cx="11.1" cy="24.8" r="0.7" fill="#f0b070"/><circle cx="17.8" cy="24.4" r="0.9" fill="#c86030"/><circle cx="17.0" cy="24.6" r="0.6" fill="#f0b070"/><circle cx="12.7" cy="18.4" r="0.6" fill="#c86030"/><circle cx="11.1" cy="20.4" r="0.7" fill="#f0b070"/><circle cx="15.2" cy="20.3" r="1.0" fill="#b04a20"/><circle cx="20.7" cy="21.0" r="0.9" fill="#c86030"/><circle cx="12.7" cy="21.1" r="1.1" fill="#f4d0a0"/></g><circle cx="14" cy="21" r="1.8" fill="#e25868"/><circle cx="1.2" cy="22" r="1.6" fill="#d03040"/></g></svg>
<span class="t lnk" style="left:181px;top:332.0px">Универсал/ЧП+Бомондъ</span>
<div style="left:410px;top:334.2px;width:8px;height:8px;background:#9ba5b3"></div>
<span class="t d" style="right:832.5px;top:332.0px;">1 045</span>
<span class="t d" style="right:739.5px;top:332.0px;">52.89<span class="rub">Р</span></span>
<span class="t d" style="right:640px;top:332.0px;">0</span>
<span class="t d" style="right:574.5px;top:332.0px;">0.000 %</span>
<span class="t d" style="right:503.5px;top:332.0px;">0.00<span class="rub">Р</span></span>
<span class="t d" style="right:432.5px;top:332.0px;">50.61<span class="rub">Р</span></span>
<span class="t d" style="right:318.5px;top:332.0px;">0</span>
<span class="t d" style="right:211.5px;top:332.0px;">0</span>
<div style="left:108px;top:357px;width:1108px;height:36.5px;background:#f7f7f7;border-top:1px solid #e9eaed"></div>
<span class="t" style="left:181px;top:368px">Всего: 5 объявлений</span>
<span class="t d" style="right:832.5px;top:368px;">34 452</span>
<span class="t d" style="right:739.5px;top:368px;">1 913.00<span class="rub">Р</span></span>
<span class="t d" style="right:640px;top:368px;">130</span>
<span class="t d" style="right:574.5px;top:368px;">0.377 %</span>
<span class="t d" style="right:503.5px;top:368px;">14.72<span class="rub">Р</span></span>
<span class="t d" style="right:432.5px;top:368px;">55.53<span class="rub">Р</span></span>
<span class="t d" style="right:318.5px;top:368px;">16</span>
<span class="t d" style="right:211.5px;top:368px;">0</span>
<div style="left:108px;top:393.5px;width:1108px;height:14.5px;background:#f1f1f1;border-radius:0 0 2px 2px"></div>
<div style="left:384px;top:394.5px;width:629.5px;height:12.5px;background:#c1c1c1"></div>
<svg style="left:113.5px;top:398px" width="3.6" height="6.5" viewBox="0 0 4 6.5" preserveAspectRatio="none"><path d="M4 0V6.5L0 3.25Z" fill="#404040"/></svg>
<svg style="left:1207px;top:398px" width="3.6" height="6.5" viewBox="0 0 4 6.5" preserveAspectRatio="none"><path d="M0 0V6.5L4 3.25Z" fill="#404040"/></svg>
<div style="left:120px;top:358px;width:1087.5px;height:37.5px;border:3px solid #e85652;border-radius:19px"></div>
</body></html>
